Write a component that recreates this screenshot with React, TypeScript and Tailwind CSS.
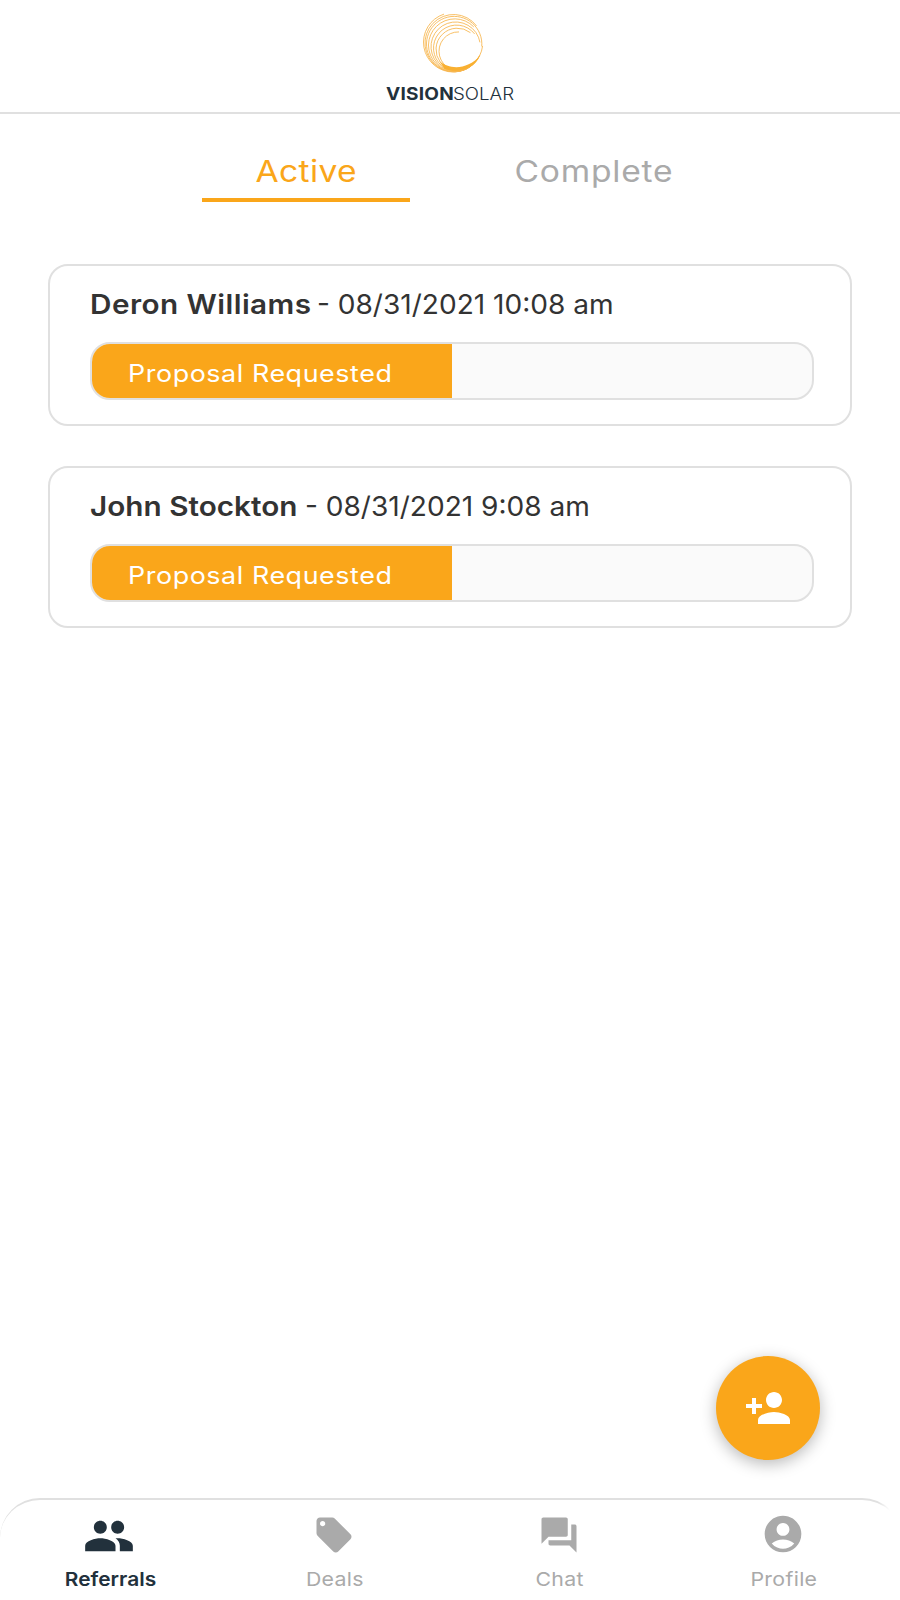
import type { ReactNode } from "react";
import {
  MdAccountCircle,
  MdLocalOffer,
  MdPeople,
  MdQuestionAnswer,
} from "react-icons/md";

type Referral = {
  name: string;
  date: string;
  status: string;
  progress: number;
  nameClass: string;
};

const referrals: Referral[] = [
  {
    name: "Deron Williams",
    date: "08/31/2021 10:08 am",
    status: "Proposal Requested",
    progress: 50,
    nameClass: "tracking-[0.4px]",
  },
  {
    name: "John Stockton",
    date: "08/31/2021 9:08 am",
    status: "Proposal Requested",
    progress: 50,
    nameClass: "",
  },
];

// Every ring touches the same point at the lower right of the sun
const rings = [
  { r: 89, start: 7, end: 252 },
  { r: 86, start: 25, end: 323 },
  { r: 83, start: 40, end: 365 },
  { r: 79, start: 45, end: 316 },
  { r: 74, start: 50, end: 350 },
  { r: 69, start: 50, end: 322 },
  { r: 64, start: 60, end: 308 },
  { r: 58, start: 60, end: 272 },
];

function ringPath(r: number, start: number, end: number) {
  const rad = Math.PI / 180;
  const cx = 147 - r * Math.cos(60 * rad);
  const cy = 180 - r * Math.sin(60 * rad);
  const point = (a: number) =>
    `${(cx + r * Math.cos(a * rad)).toFixed(1)} ${(cy + r * Math.sin(a * rad)).toFixed(1)}`;
  return `M${point(start)}A${r} ${r} 0 ${end - start > 180 ? 1 : 0} 1 ${point(end)}`;
}

function Logo() {
  return (
    <div className="flex flex-col items-center">
      <svg
        className="ml-[7px] size-[70px]"
        viewBox="0 0 210 210"
        fill="none"
        stroke="#f7b64f"
        strokeWidth="2.6">
        {rings.map((ring) => (
          <path
            key={ring.r}
            d={ringPath(ring.r, ring.start, ring.end)}
          />
        ))}
        <path
          d="M62 160C90 184 145 188 184 142C166 184 118 198 76 182Z"
          fill="#f9b031"
          stroke="none"
        />
      </svg>
      <div className="mt-[6px] flex text-[17px] leading-5 text-[#22313c]">
        <span className="w-[67px] origin-left scale-x-112 font-bold tracking-[0.2px]">
          VISION
        </span>
        <span className="w-[62px] origin-left scale-x-110 font-light">
          SOLAR
        </span>
      </div>
    </div>
  );
}

function ReferralCard({ referral }: { referral: Referral }) {
  return (
    <div className="h-[162px] rounded-[20px] border-2 border-[#e0e0e0] px-10 pt-[21px]">
      <p className="flex h-9 items-center text-[27px] whitespace-pre text-[#333]">
        <span
          className={`origin-left scale-x-110 font-semibold ${referral.nameClass}`}>
          {referral.name}
        </span>
        <span className="ml-[18px] origin-left scale-x-104">
          {" "}
          - {referral.date}
        </span>
      </p>
      <div className="mt-[19px] h-[58px] w-[724px] overflow-hidden rounded-[20px] border-2 border-[#e0e0e0] bg-[#fafafa]">
        <div
          className="flex h-full items-center bg-[#faa61a] pt-1.5 pl-9 text-2xl whitespace-nowrap text-white"
          style={{ width: `${referral.progress}%` }}>
          <span className="origin-left scale-x-112 tracking-[0.5px]">
            {referral.status}
          </span>
        </div>
      </div>
    </div>
  );
}

function NavItem({
  icon,
  label,
  active,
}: {
  icon: ReactNode;
  label: string;
  active?: boolean;
}) {
  return (
    <div
      className={`flex flex-1 flex-col items-center text-[19px] ${
        active ? "font-semibold text-[#22313c]" : "text-[#aaa]"
      }`}>
      <div className="mt-2 flex h-[54px] items-center">{icon}</div>
      <span
        className={`mt-1.5 leading-6 ${
          active ? "scale-x-110" : "scale-x-112 tracking-[0.3px]"
        }`}>
        {label}
      </span>
    </div>
  );
}

export default function App() {
  return (
    <div className="relative flex h-[1600px] w-[900px] flex-col overflow-hidden bg-white font-['Inter',sans-serif]">
      <header className="flex h-[114px] justify-center border-b-2 border-[#e0e0e0] pt-2">
        <Logo />
      </header>

      {/* Tabs */}
      <div className="mt-8 flex pl-[202px] text-[30px]">
        <div className="flex h-14 w-52 justify-center border-b-4 border-[#faa61a] pt-[3px] tracking-[0.3px] text-[#faa61a]">
          <span className="scale-x-112">Active</span>
        </div>
        <div className="ml-20 flex h-14 w-52 justify-center pt-[3px] tracking-[0.7px] text-[#aaa]">
          <span className="scale-x-112">Complete</span>
        </div>
      </div>

      <main className="mt-[62px] flex flex-1 flex-col gap-10 px-12">
        {referrals.map((referral) => (
          <ReferralCard
            key={referral.name}
            referral={referral}
          />
        ))}
      </main>

      {/* Add referral */}
      <button className="absolute right-20 bottom-[140px] flex size-26 items-center justify-center rounded-full bg-[#faa61a] text-white shadow-[0_4px_16px_rgba(0,0,0,0.28)]">
        <svg
          className="size-12"
          viewBox="0 0 24 24"
          fill="currentColor">
          <path d="M15 12c2.21 0 4-1.79 4-4s-1.79-4-4-4-4 1.79-4 4 1.79 4 4 4zm-9-2V7H4v3H1v2h3v3h2v-3h3v-2H6zm9 4c-2.67 0-8 1.34-8 4v2h16v-2c0-2.66-5.33-4-8-4z" />
        </svg>
      </button>

      <nav className="relative -mr-0.5 h-[102px] rounded-t-[40px] border-t-2 border-[#e0e0e0]">
        <div className="-ml-0.5 flex pr-1.5">
          <NavItem
            icon={<MdPeople size={52} className="mt-0.5 mr-0.5" />}
            label="Referrals"
            active
          />
          <NavItem
            icon={<MdLocalOffer size={42} className="mr-px" />}
            label="Deals"
          />
          <NavItem
            icon={<MdQuestionAnswer size={42} />}
            label="Chat"
          />
          <NavItem
            icon={<MdAccountCircle size={44} className="mr-0.5 mb-0.5" />}
            label="Profile"
          />
        </div>
        {/* The border fades out toward the right edge */}
        <div className="absolute -top-0.5 right-0 h-12 w-6 bg-linear-to-r from-transparent via-white to-white" />
      </nav>
    </div>
  );
}
